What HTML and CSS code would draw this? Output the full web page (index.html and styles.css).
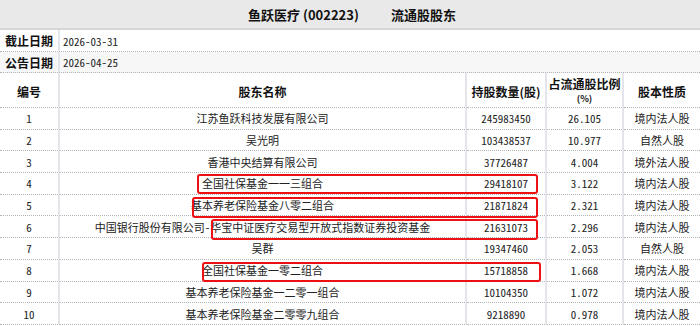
FILE: index.html
```html
<!DOCTYPE html>
<html lang="zh-CN">
<head>
<meta charset="utf-8">
<link rel="stylesheet" href="styles.css">
</head>
<body>
<div class="page">
  <div class="title">鱼跃医疗 (002223)<span class="sub">流通股股东</span></div>
  <div class="meta">
    <div class="meta-label">截止日期</div><div class="meta-value">2026-03-31</div>
  </div>
  <div class="meta alt">
    <div class="meta-label">公告日期</div><div class="meta-value">2026-04-25</div>
  </div>
  <div class="grid">
    <div class="hd">编号</div>
    <div class="hd">股东名称</div>
    <div class="hd">持股数量(股)</div>
    <div class="hd two"><span class="l1">占流通股比例</span><span class="pct">(%)</span></div>
    <div class="hd last">股本性质</div>

    <div class="c">1</div><div class="c">江苏鱼跃科技发展有限公司</div><div class="c num">245983450</div><div class="c num">26.105</div><div class="c last">境内法人股</div>
    <div class="c">2</div><div class="c">吴光明</div><div class="c num">103438537</div><div class="c num">10.977</div><div class="c last">自然人股</div>
    <div class="c">3</div><div class="c">香港中央结算有限公司</div><div class="c num">37726487</div><div class="c num">4.004</div><div class="c last">境外法人股</div>
    <div class="c">4</div><div class="c">全国社保基金一一三组合</div><div class="c num">29418107</div><div class="c num">3.122</div><div class="c last">境内法人股</div>
    <div class="c">5</div><div class="c">基本养老保险基金八零二组合</div><div class="c num">21871824</div><div class="c num">2.321</div><div class="c last">境内法人股</div>
    <div class="c">6</div><div class="c">中国银行股份有限公司－华宝中证医疗交易型开放式指数证券投资基金</div><div class="c num">21631073</div><div class="c num">2.296</div><div class="c last">境内法人股</div>
    <div class="c">7</div><div class="c">吴群</div><div class="c num">19347460</div><div class="c num">2.053</div><div class="c last">自然人股</div>
    <div class="c">8</div><div class="c">全国社保基金一零二组合</div><div class="c num">15718858</div><div class="c num">1.668</div><div class="c last">境内法人股</div>
    <div class="c">9</div><div class="c">基本养老保险基金一二零一组合</div><div class="c num">10104350</div><div class="c num">1.072</div><div class="c last">境内法人股</div>
    <div class="c">10</div><div class="c">基本养老保险基金二零零九组合</div><div class="c num">9218890</div><div class="c num">0.978</div><div class="c last">境内法人股</div>
  </div>
  <div class="mark m4"></div>
  <div class="mark m5"></div>
  <div class="mark m6"></div>
  <div class="mark m8"></div>
</div>
</body>
</html>
```
FILE: styles.css
```css
* { box-sizing: border-box; }
html, body { margin: 0; padding: 0; background: #fff; }
body {
  font-family: "Noto Sans CJK SC", "Noto Sans", sans-serif;
  font-size: 11px;
  color: #222;
  font-feature-settings: "hwid";
}
.page { position: relative; width: 700px; height: 326px; overflow: hidden; }
.title {
  height: 30px;
  background: #e9e9e9;
  border-bottom: 2px solid #d6d6d6;
  display: flex;
  justify-content: center;
  align-items: center;
  font-size: 13px;
  font-weight: bold;
  color: #111;
  padding-left: 4px;
  font-feature-settings: normal;
}
.title .sub { margin-left: 32px; }
.meta {
  display: flex;
  height: 22px;
  border-bottom: 1px dotted #b4b4b4;
}
.meta.alt { background: #f7f7f7; height: 21px; }
.meta-label {
  width: 60px;
  border-right: 2px solid #e3e5ea;
  display: flex;
  align-items: center;
  justify-content: center;
  font-weight: bold;
  font-size: 12px;
  color: #111;
  font-feature-settings: normal;
}
.meta-value {
  display: flex;
  align-items: center;
  padding-left: 3px;
}
.grid {
  display: grid;
  grid-template-columns: 60px 407px 80px 77px 76px;
  grid-template-rows: 35px repeat(10, 21.7px);
}
.hd, .c {
  display: flex;
  align-items: center;
  justify-content: center;
  border-bottom: 1px dotted #b4b4b4;
  border-right: 2px solid #e3e5ea;
  white-space: nowrap;
}
.hd {
  font-weight: bold;
  font-size: 12px;
  color: #111;
  font-feature-settings: normal;
  padding-top: 2px;
}
.hd.two {
  flex-direction: column;
  padding-top: 0;
  padding-bottom: 0;
}
.hd .l1 { display: block; line-height: 17px; }
.hd .pct { display: block; font-size: 9px; line-height: 13px; }
.last { border-right: none; }
.mark {
  position: absolute;
  border: 2px solid #ee1111;
  border-radius: 3px;
}
.m4 { left: 197px; top: 174px; width: 341px; height: 20px; }
.m5 { left: 192px; top: 197px; width: 346px; height: 21px; }
.m6 { left: 211px; top: 219px; width: 327px; height: 21px; }
.m8 { left: 202px; top: 262px; width: 339px; height: 20px; }
```
